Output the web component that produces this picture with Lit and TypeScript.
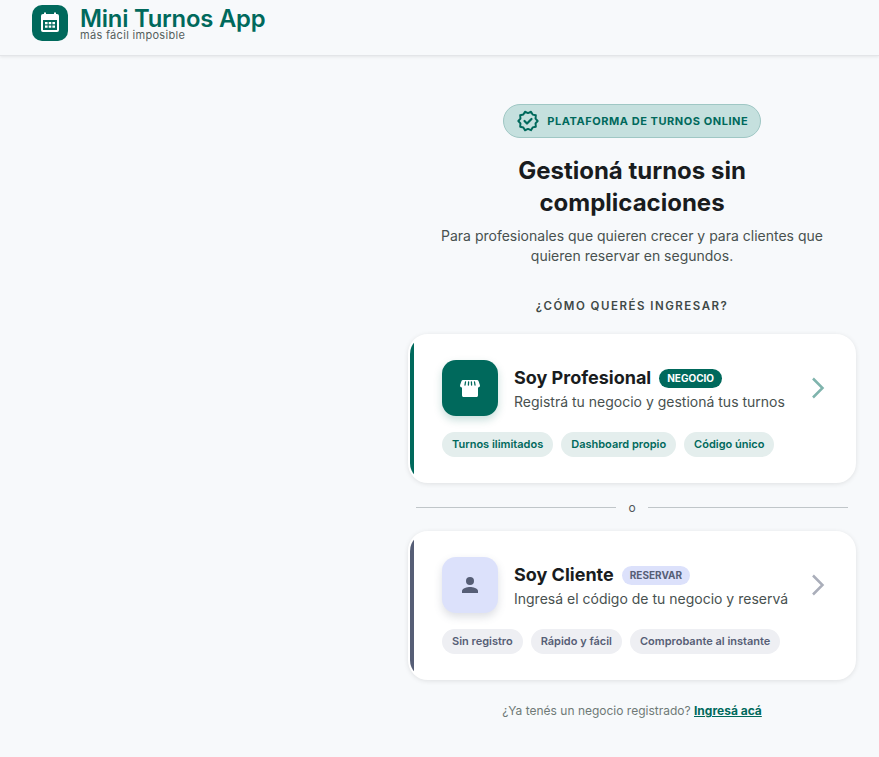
import { LitElement, html, css, svg } from "lit";
import { customElement } from "lit/decorators.js";

const calendar = svg`<svg width="24" height="24" viewBox="0 0 24 24" fill="#fff"><path d="M19 3h-1V1.500h-2V3H8V1.500H6V3H5a2 2 0 0 0-2 2v14a2 2 0 0 0 2 2h14a2 2 0 0 0 2-2V5a2 2 0 0 0-2-2Zm0 16H5V9h14v10Z"/><path d="M7 11h2.600v2.200H7zM10.700 11h2.600v2.200h-2.600zM14.400 11H17v2.200h-2.600zM7 14.600h2.600v2.200H7zM10.700 14.600h2.600v2.200h-2.600zM14.400 14.600H17v2.200h-2.600z"/></svg>`;
const verified = svg`<svg width="24" height="24" viewBox="0 0 24 24" fill="none" stroke="#00695c" stroke-width="2.200" stroke-linecap="round" stroke-linejoin="round"><path transform="translate(1.440 1.440) scale(.88)" d="M23 12l-2.440-2.790.340-3.690-3.610-.820-1.890-3.200L12 2.960 8.600 1.500 6.710 4.690 3.100 5.500l.340 3.700L1 12l2.440 2.790-.340 3.700 3.610.820L8.600 22.500l3.400-1.470 3.400 1.460 1.890-3.190 3.610-.820-.340-3.690L23 12z"/><path d="M8.500 12l2.500 2.500 4.500-4.500"/></svg>`;
const store = svg`<svg width="24" height="24" viewBox="0 0 24 24" fill="#fff"><path d="M5 4h14c.8 0 1.300.4 1.500 1l1.400 4c.4 1.300-.5 2.500-1.800 2.500H3.900c-1.300 0-2.200-1.200-1.800-2.500L3.500 5c.2-.6.700-1 1.500-1Z"/><path d="M4 11h16v8.200c0 1-.7 1.800-1.600 1.800H5.600C4.700 21 4 20.200 4 19.200Z"/><path d="M7.500 6 7 9M10.600 6 10.400 9M13.400 6 13.600 9M16.500 6 17 9" stroke="#00695c" stroke-width="1.300" stroke-linecap="round" fill="none"/></svg>`;
const person = svg`<svg width="24" height="24" viewBox="0 0 24 24" fill="#565e76"><circle cx="12" cy="8" r="4"/><path d="M4 20v-2c0-2.700 5.300-4 8-4s8 1.300 8 4v2Z"/></svg>`;
const chevron = (c: string) => svg`<svg width="14" height="24" viewBox="0 0 14 24" fill="none" stroke="${c}" stroke-width="2.500"><path d="M2 2.500 11.500 12 2 21.500"/></svg>`;

@customElement("app-root")
export class AppRoot extends LitElement {
  static styles = css`
    :host { display: block; min-height: 757px; background: #f7f9fb; font-family: Inter, "Liberation Sans", sans-serif; color: #191c1e; overflow: hidden; }
    header { height: 56px; box-sizing: border-box; padding: 5px 32px 0; display: flex; gap: 12px; align-items: flex-start; border-bottom: 1px solid #e3e5e8; box-shadow: 0 1px 3px rgba(0,0,0,.08); }
    .logo { width: 36px; height: 36px; border-radius: 10px; background: #00695c; display: flex; align-items: center; justify-content: center; }
    .brand { display: flex; flex-direction: column; margin-top: 1.500px; }
    .brand b { font: 560 23.800px/23px Inter, sans-serif; color: #00695c; letter-spacing: -.2px; }
    .brand span { font-size: 11px; line-height: 10px; color: #555f5d; letter-spacing: .3px; }
    main { display: flex; justify-content: flex-end; padding: 48px 23px 0 0; }
    .col { width: 448px; display: flex; flex-direction: column; align-items: center; }
    .pill { height: 34px; box-sizing: border-box; padding: 0 12px; display: flex; align-items: center; gap: 7.500px; background: #c5e0de; border: 1px solid #9fc7c4; border-radius: 17px; font-size: 11px; font-weight: 700; letter-spacing: .55px; color: #00695c; }
    h1 { margin: 17px 0 0; width: 300px; text-align: center; font: 650 24px/32px Inter, sans-serif; color: #191c1e; }
    .lead { margin: 7px 0 0; width: 420px; text-align: center; font-size: 14px; line-height: 20px; color: #48514f; }
    .ask { margin: 32px 0 0; font-size: 11.500px; font-weight: 600; letter-spacing: 1.500px; line-height: 16px; color: #3f4947; }
    .card { margin-top: 20px; width: 100%; height: 149px; box-sizing: border-box; display: flex; overflow: hidden; background: #fff; border: 2px solid #fff; border-radius: 20px; box-shadow: 0 1px 5px rgba(0,0,0,.1); }
    .card.client { margin-top: 0; }
    .bar { width: 4px; flex: none; background: #00695c; }
    .client .bar { background: #565e76; }
    .body { flex: 1; min-width: 0; padding: 24px 29px 0 28px; }
    .top { display: flex; align-items: center; gap: 16px; }
    .icon { width: 56px; height: 56px; border-radius: 14px; background: #00695c; display: flex; align-items: center; justify-content: center; box-shadow: 0 4px 8px rgba(0,105,92,.22); flex: none; }
    .client .icon { background: #dce1fb; box-shadow: 0 4px 8px rgba(86,94,118,.2); }
    .txt { flex: 1; }
    .t { display: flex; align-items: center; gap: 8px; height: 28px; }
    .t b { font-size: 18px; line-height: 26px; font-weight: 700; color: #191c1e; }
    .tag { height: 19px; display: flex; align-items: center; padding: 0 8px; border-radius: 10px; background: #00695c; color: #fff; font-size: 10px; font-weight: 700; }
    .client .tag { background: #dce1fb; color: #565e76; }
    .s { font-size: 14px; line-height: 20px; color: #48514f; }
    .chips { display: flex; gap: 8px; margin-top: 16px; }
    .chip { height: 25px; box-sizing: border-box; display: flex; align-items: center; padding: 0 10px 1px; border-radius: 13px; background: #e4eeed; color: #00695c; font-size: 11px; font-weight: 600; }
    .client .chip { background: #eeeff3; color: #565e76; }
    .or { width: 432px; margin: 0; height: 48px; display: flex; align-items: center; gap: 12px; font-size: 12px; color: #50585a; }
    .or i { flex: 1; height: 1px; background: #c0c6c9; }
    .foot { margin-top: 22px; font-size: 12px; line-height: 18px; color: #6f7977; }
    .foot a { color: #00695c; font-weight: 700; text-decoration: underline; }
  `;
  card(cls: string, icon: unknown, title: string, tag: string, sub: string, chips: string[], chev: string) {
    return html`<div class="card ${cls}">
      <div class="bar"></div>
      <div class="body">
        <div class="top">
          <div class="icon">${icon}</div>
          <div class="txt">
            <div class="t"><b>${title}</b><span class="tag">${tag}</span></div>
            <div class="s">${sub}</div>
          </div>
          ${chevron(chev)}
        </div>
        <div class="chips">${chips.map((c) => html`<span class="chip">${c}</span>`)}</div>
      </div>
    </div>`;
  }
  render() {
    return html`
      <header>
        <div class="logo">${calendar}</div>
        <div class="brand"><b>Mini Turnos App</b><span>más fácil imposible</span></div>
      </header>
      <main><div class="col">
        <div class="pill">${verified}PLATAFORMA DE TURNOS ONLINE</div>
        <h1>Gestioná turnos sin complicaciones</h1>
        <p class="lead">Para profesionales que quieren crecer y para clientes que quieren reservar en segundos.</p>
        <div class="ask">¿CÓMO QUERÉS INGRESAR?</div>
        ${this.card("", store, "Soy Profesional", "NEGOCIO", "Registrá tu negocio y gestioná tus turnos", ["Turnos ilimitados", "Dashboard propio", "Código único"], "#7fb4ad")}
        <div class="or"><i></i>o<i></i></div>
        ${this.card("client", person, "Soy Cliente", "RESERVAR", "Ingresá el código de tu negocio y reservá", ["Sin registro", "Rápido y fácil", "Comprobante al instante"], "#aaaeba")}
        <div class="foot">¿Ya tenés un negocio registrado? <a>Ingresá acá</a></div>
      </div></main>
    `;
  }
}
